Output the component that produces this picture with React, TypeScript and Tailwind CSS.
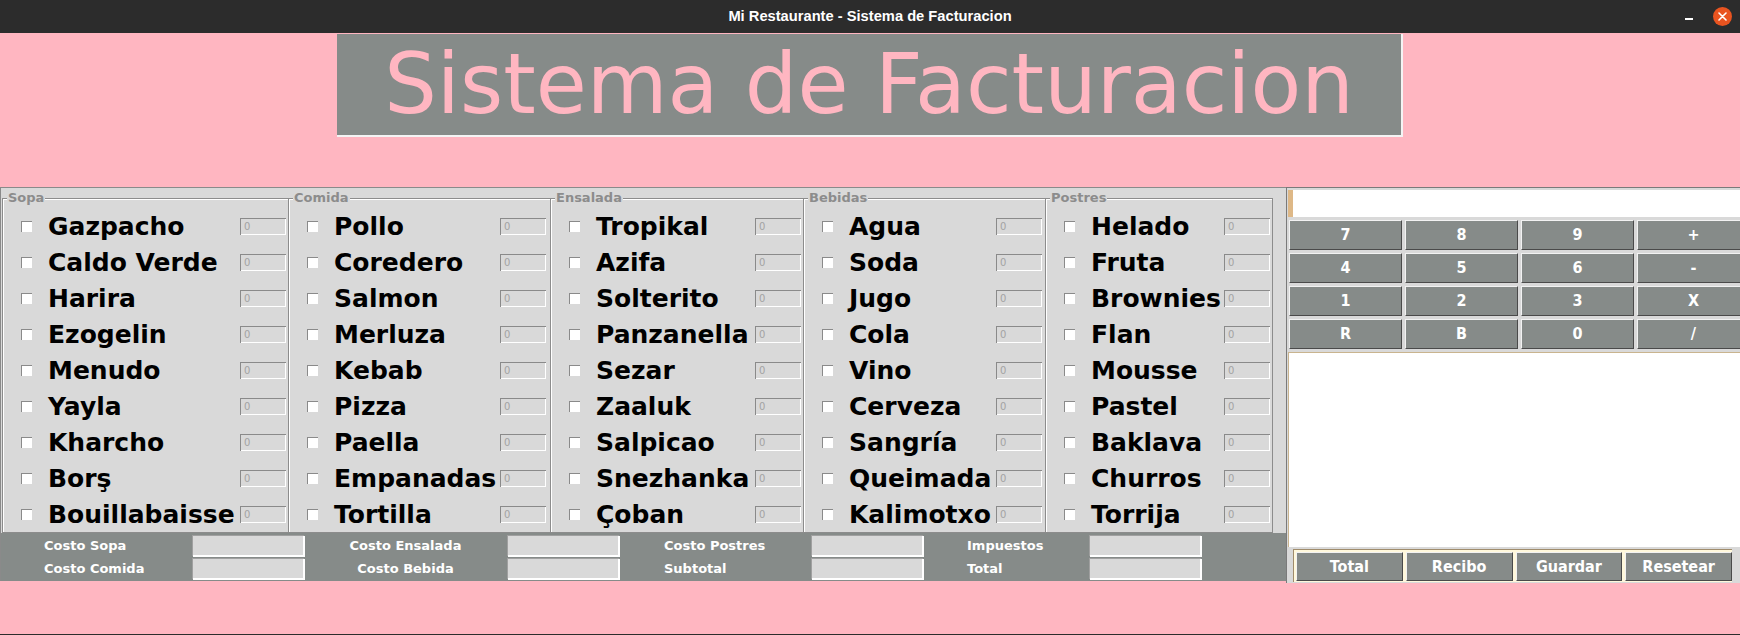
import React from "react";

type Column = {
    title: string;
    width: string;
    labelWidth: string;
    items: string[];
    last?: boolean;
};

const columns: Column[] = [
    {title: 'Sopa', width: 'w-[286px]', labelWidth: 'w-[192px]', items: ['Gazpacho', 'Caldo Verde', 'Harira', 'Ezogelin', 'Menudo', 'Yayla', 'Kharcho', 'Borş', 'Bouillabaisse']},
    {title: 'Comida', width: 'w-[262px]', labelWidth: 'w-[166px]', items: ['Pollo', 'Coredero', 'Salmon', 'Merluza', 'Kebab', 'Pizza', 'Paella', 'Empanadas', 'Tortilla']},
    {title: 'Ensalada', width: 'w-[253px]', labelWidth: 'w-[159px]', items: ['Tropikal', 'Azifa', 'Solterito', 'Panzanella', 'Sezar', 'Zaaluk', 'Salpicao', 'Snezhanka', 'Çoban']},
    {title: 'Bebidas', width: 'w-[242px]', labelWidth: 'w-[147px]', items: ['Agua', 'Soda', 'Jugo', 'Cola', 'Vino', 'Cerveza', 'Sangría', 'Queimada', 'Kalimotxo']},
    {title: 'Postres', width: 'w-[228px]', labelWidth: 'w-[133px]', items: ['Helado', 'Fruta', 'Brownies', 'Flan', 'Mousse', 'Pastel', 'Baklava', 'Churros', 'Torrija'], last: true},
];

const calcKeys = ['7', '8', '9', '+', '4', '5', '6', '-', '1', '2', '3', 'X', 'R', 'B', '0', '/'];

const costGroups = [
    {labels: ['Costo Sopa', 'Costo Comida'], labelClass: 'w-[191px] pl-[43px] justify-start'},
    {labels: ['Costo Ensalada', 'Costo Bebida'], labelClass: 'w-[203px] justify-center'},
    {labels: ['Costo Postres', 'Subtotal'], labelClass: 'w-[192px] pl-[45px] justify-start'},
    {labels: ['Impuestos', 'Total'], labelClass: 'w-[166px] pl-[44px] justify-start'},
];

const font = "font-['DejaVu_Sans',sans-serif]";

function SmallEntry() {
    return (
        <div className="w-[46px] h-[17px] shrink-0 bg-[#d9d9d9] border-t border-l border-[#8a8a8a] shadow-[inset_-1px_-1px_0_#ffffff] flex items-center pl-[3px] text-[10px] leading-none text-[#a3a3a3]">
            0
        </div>
    );
}

function FoodFrame({column}: { column: Column }) {
    return (
        <div className={`${column.width} shrink-0 flex flex-col`}>
            <div className="flex h-[12px]">
                <div className="w-[5px] h-[6px] self-end border-t border-l border-[#8c8c8c] shadow-[inset_1px_1px_0_#ffffff]"/>
                <span className="px-px text-[13px] font-bold leading-[12px] text-[#8c8c8c]">{column.title}</span>
                <div className={`flex-1 h-[6px] self-end border-t border-[#8c8c8c] shadow-[inset_0_1px_0_#ffffff] ${column.last ? 'border-r' : ''}`}/>
            </div>
            <div className={`flex flex-col pt-[4px] pl-[18px] border-l border-b border-[#8c8c8c] shadow-[inset_1px_0_0_#ffffff] ${column.last ? 'border-r' : ''}`}>
                {column.items.map((item) => (
                    <div key={item} className="flex items-center h-[36px]">
                        <div className="w-[11px] h-[11px] shrink-0 bg-white border-t border-l border-[#8a8a8a]"/>
                        <div className={`ml-[16px] ${column.labelWidth} shrink-0 whitespace-nowrap text-[25px] font-bold leading-none text-black`}>
                            {item}
                        </div>
                        <SmallEntry/>
                    </div>
                ))}
            </div>
        </div>
    );
}

function CostPanel() {
    return (
        <div className="flex h-[48px] bg-[#868b89] py-[2px]">
            {costGroups.map((group) => (
                <React.Fragment key={group.labels[0]}>
                    <div className="flex flex-col gap-[2px] shrink-0">
                        {group.labels.map((label) => (
                            <div key={label} className={`${group.labelClass} h-[21px] flex items-center text-[13px] font-bold text-white leading-none`}>
                                {label}
                            </div>
                        ))}
                    </div>
                    <div className="flex flex-col gap-[2px] shrink-0">
                        <div className="w-[112px] h-[21px] bg-[#d9d9d9] border-t border-l border-[#a0a0a0] shadow-[inset_-1px_-1px_0_#ffffff,1px_1px_0_#ffffff]"/>
                        <div className="w-[112px] h-[21px] bg-[#d9d9d9] border-t border-l border-[#a0a0a0] shadow-[inset_-1px_-1px_0_#ffffff,1px_1px_0_#ffffff]"/>
                    </div>
                </React.Fragment>
            ))}
        </div>
    );
}

function RightPanel() {
    return (
        <div className="w-[454px] h-[396px] shrink-0 overflow-hidden bg-[#d9d9d9] border-t border-l border-[#7a7a7a] flex flex-col">
            <div className="mt-[2px] ml-px w-[470px] h-[27px] shrink-0 bg-white border-l-[5px] border-[#deb887]"/>
            <div className="mt-[3px] ml-[2px] w-[470px] grid grid-cols-[113px_113px_113px_113px] grid-rows-[30px_30px_30px_30px] gap-[3px] shrink-0">
                {calcKeys.map((key) => (
                    <div key={key}
                         className="bg-[#868b89] border-t border-l border-[#f2f2f2] border-b border-r border-b-[#4a4a4a] border-r-[#4a4a4a] flex items-center justify-center text-[16px] font-bold text-white leading-none font-['DejaVu_Sans_Condensed','DejaVu_Sans',sans-serif]">
                        {key}
                    </div>
                ))}
            </div>
            <div className="mt-[3px] ml-px w-[470px] h-[195px] shrink-0 bg-white border-t border-l border-[#c9b48f]"/>
            <div className="mt-[2px] ml-[6px] w-[439px] h-[33px] shrink-0 bg-[#fff8dc] border-t border-l border-[#a08c6c] flex gap-[3px] pt-[2px] pl-[2px]">
                {['Total', 'Recibo', 'Guardar', 'Resetear'].map((label) => (
                    <div key={label}
                         className="w-[107px] h-[29px] bg-[#868b89] border-t border-l border-[#f2f2f2] border-b border-r border-b-[#4a4a4a] border-r-[#4a4a4a] flex items-center justify-center text-[16px] font-bold text-white leading-none font-['DejaVu_Sans_Condensed','DejaVu_Sans',sans-serif]">
                        {label}
                    </div>
                ))}
            </div>
        </div>
    );
}

export default function App() {
    return (
        <div className={`w-[1740px] h-[635px] overflow-hidden bg-[#ffb6c1] border-b border-[#2c2c2c] flex flex-col ${font}`}>
            <div className="h-[33px] shrink-0 bg-[#2c2c2c] grid grid-cols-[1fr_auto_1fr] items-center">
                <div/>
                <span className="text-[14.7px] font-bold text-white font-['Liberation_Sans',sans-serif]">
                    Mi Restaurante - Sistema de Facturacion
                </span>
                <div className="flex items-center justify-end gap-[20px] pr-[8px]">
                    <div className="w-[8px] h-[2px] bg-white mt-[4px]"/>
                    <div className="w-[19px] h-[19px] rounded-full bg-[#e95420] flex items-center justify-center">
                        <svg width="9" height="9" viewBox="0 0 9 9">
                            <path d="M1 1 L8 8 M8 1 L1 8" stroke="#ffffff" strokeWidth="1.6" strokeLinecap="round"/>
                        </svg>
                    </div>
                </div>
            </div>

            <div className="mt-px mx-auto w-[1066px] h-[103px] shrink-0 bg-[#868b89] border-r-2 border-b-2 border-[#f4f4f4] flex items-center justify-center">
                <span className="text-[83px] leading-none text-[#ffb6c1] whitespace-nowrap">Sistema de Facturacion</span>
            </div>

            <div className="mt-[50px] flex items-start">
                <div className="w-[1286px] h-[394px] shrink-0 bg-[#d9d9d9] border-t border-l border-[#8a8a8a] flex flex-col">
                    <div className="flex pt-[4px] pl-px h-[345px]">
                        {columns.map((column) => (
                            <FoodFrame key={column.title} column={column}/>
                        ))}
                    </div>
                    <CostPanel/>
                </div>
                <RightPanel/>
            </div>
        </div>
    );
}
